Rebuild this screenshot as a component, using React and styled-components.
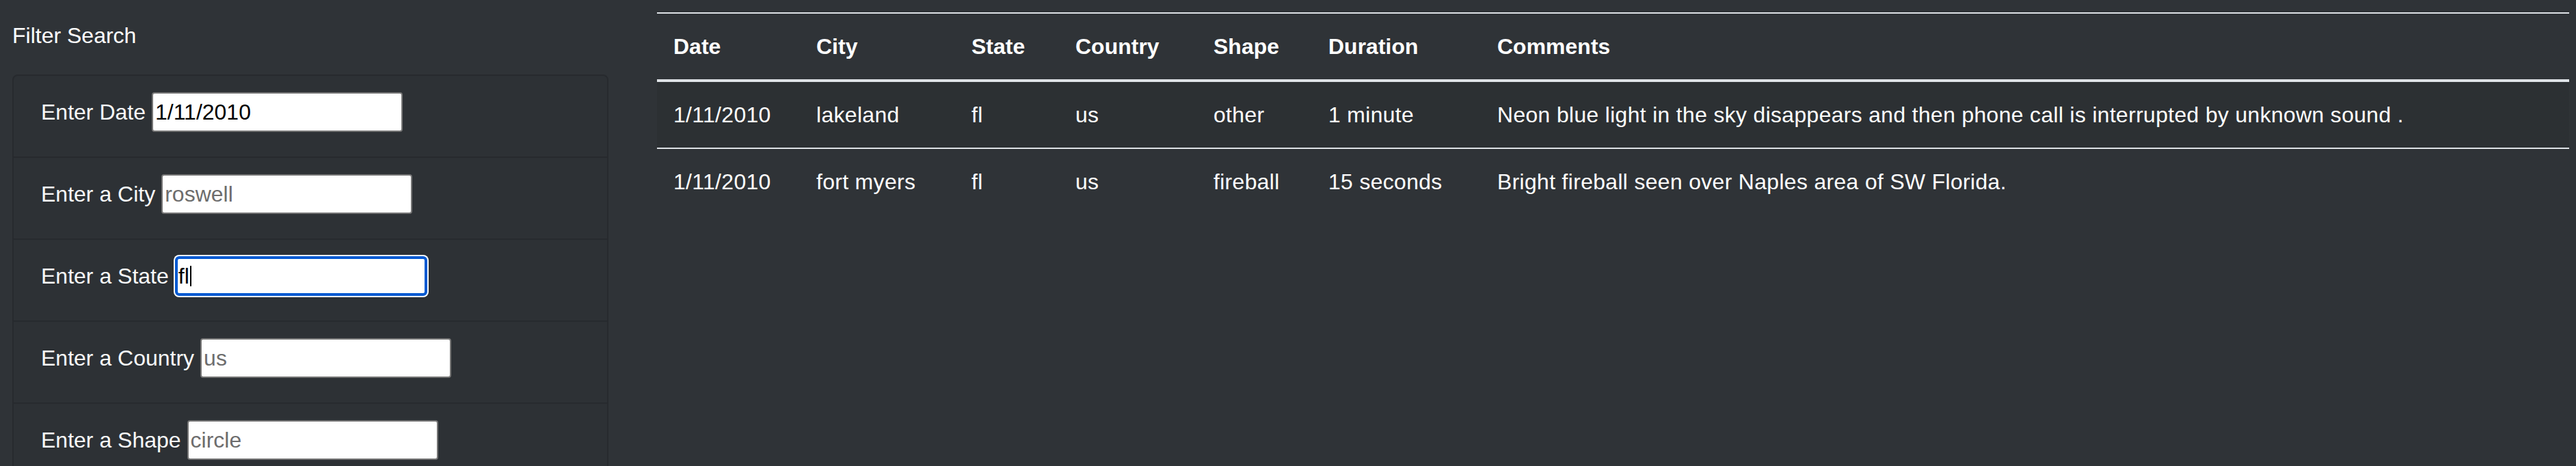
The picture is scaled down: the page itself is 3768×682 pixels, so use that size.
import React from 'react';
import styled, { createGlobalStyle } from 'styled-components';

const GlobalStyle = createGlobalStyle`
  * { box-sizing: border-box; }
  body {
    margin: 0;
    background: #2f3337;
    color: #fff;
    font-family: "Liberation Sans", Arial, Helvetica, sans-serif;
    font-size: 32px;
    line-height: 48px;
  }
`;

const Page = styled.div`
  display: flex;
  align-items: flex-start;
  gap: 71px;
  min-height: 100vh;
  padding: 18px 10px 0 18px;
`;

const Sidebar = styled.aside`
  flex: 0 0 872px;
`;

const Title = styled.h5`
  margin: 10px 0 33px 0;
  font-size: 32px;
  font-weight: 400;
  line-height: 48px;
`;

const FilterList = styled.ul`
  list-style: none;
  margin: 0;
  padding: 0;
  border: 2px solid #272a2e;
  border-radius: 8px;
  background: #2d3135;
  overflow: hidden;
`;

const FilterItem = styled.li`
  display: flex;
  align-items: center;
  gap: 9px;
  padding: 24px 40px 36px;

  & + & {
    border-top: 2px solid #272a2e;
  }
`;

const Label = styled.label`
  color: #f8f9fa;
  line-height: 58px;
  white-space: nowrap;
`;

const TextInput = styled.input`
  width: 367px;
  height: 58px;
  padding: 0 3px;
  border: 2px solid #767676;
  border-radius: 4px;
  background: #fff;
  color: #000;
  font-family: inherit;
  font-size: 32px;
  outline: none;

  &::placeholder {
    color: #6d6d6d;
    opacity: 1;
  }
`;

const FocusField = styled.div`
  display: flex;
  align-items: center;
  width: 369px;
  height: 58px;
  padding: 0 1px;
  border: 4px solid #0059d1;
  border-radius: 6px;
  background: #fff;
  box-shadow: 0 0 0 2px #fff;
  color: #000;
  font-size: 32px;
`;

const Caret = styled.span`
  display: inline-block;
  width: 2px;
  height: 30px;
  margin-left: 1px;
  background: #000;
`;

const Results = styled.main`
  flex: 1;
`;

const Table = styled.table`
  width: 100%;
  border-collapse: collapse;
  table-layout: fixed;
`;

const Col = styled.col`
  width: ${p => (p.$w ? `${p.$w}px` : 'auto')};
`;

const HeadCell = styled.th`
  padding: 24px;
  text-align: left;
  font-weight: 700;
  line-height: 48px;
  border-top: 2px solid #dee2e6;
  border-bottom: 4px solid #dee2e6;
  vertical-align: bottom;
`;

const BodyRow = styled.tr`
  &:nth-of-type(odd) {
    background: rgba(0, 0, 0, 0.06);
  }
`;

const Cell = styled.td`
  padding: 24px;
  line-height: 48px;
  letter-spacing: 0.3px;
  border-top: 2px solid #dee2e6;
  vertical-align: top;
  white-space: nowrap;
`;

const columns = [
  { title: 'Date', width: 209 },
  { title: 'City', width: 227 },
  { title: 'State', width: 152 },
  { title: 'Country', width: 202 },
  { title: 'Shape', width: 168 },
  { title: 'Duration', width: 247 },
  { title: 'Comments' },
];

const sightings = [
  ['1/11/2010', 'lakeland', 'fl', 'us', 'other', '1 minute', 'Neon blue light in the sky disappears and then phone call is interrupted by unknown sound .'],
  ['1/11/2010', 'fort myers', 'fl', 'us', 'fireball', '15 seconds', 'Bright fireball seen over Naples area of SW Florida.'],
];

export default function App() {
  return (
    <>
      <GlobalStyle />
      <Page>
        <Sidebar>
          <Title>Filter Search</Title>
          <FilterList>
            <FilterItem>
              <Label htmlFor="datetime">Enter Date</Label>
              <TextInput id="datetime" type="text" defaultValue="1/11/2010" />
            </FilterItem>
            <FilterItem>
              <Label htmlFor="city">Enter a City</Label>
              <TextInput id="city" type="text" placeholder="roswell" />
            </FilterItem>
            <FilterItem>
              <Label>Enter a State</Label>
              <FocusField>
                <span>fl</span>
                <Caret />
              </FocusField>
            </FilterItem>
            <FilterItem>
              <Label htmlFor="country">Enter a Country</Label>
              <TextInput id="country" type="text" placeholder="us" />
            </FilterItem>
            <FilterItem>
              <Label htmlFor="shape">Enter a Shape</Label>
              <TextInput id="shape" type="text" placeholder="circle" />
            </FilterItem>
          </FilterList>
        </Sidebar>

        <Results>
          <Table>
            <colgroup>
              {columns.map(c => <Col key={c.title} $w={c.width} />)}
            </colgroup>
            <thead>
              <tr>
                {columns.map(c => <HeadCell key={c.title}>{c.title}</HeadCell>)}
              </tr>
            </thead>
            <tbody>
              {sightings.map((row, i) => (
                <BodyRow key={i}>
                  {row.map((v, j) => <Cell key={j}>{v}</Cell>)}
                </BodyRow>
              ))}
            </tbody>
          </Table>
        </Results>
      </Page>
    </>
  );
}
